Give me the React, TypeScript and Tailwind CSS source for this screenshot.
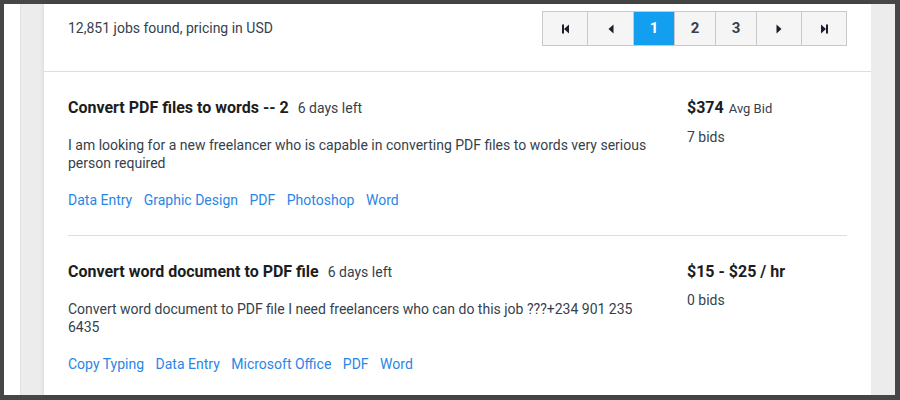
import React from "react";

const FirstIcon = () => (
  <svg width="9" height="10" viewBox="0 0 9 10" className="fill-[#1e1e2a]">
    <rect x="1" y="0.5" width="2" height="9" />
    <polygon points="8,0.5 3,5 8,9.5" />
  </svg>
);
const PrevIcon = () => (
  <svg width="6" height="10" viewBox="0 0 6 10" className="fill-[#1e1e2a]">
    <polygon points="5.5,0.5 0.5,5 5.5,9.5" />
  </svg>
);
const NextIcon = () => (
  <svg width="6" height="10" viewBox="0 0 6 10" className="fill-[#1e1e2a]">
    <polygon points="0.5,0.5 5.5,5 0.5,9.5" />
  </svg>
);
const LastIcon = () => (
  <svg width="9" height="10" viewBox="0 0 9 10" className="fill-[#1e1e2a]">
    <polygon points="1,0.5 6,5 1,9.5" />
    <rect x="6" y="0.5" width="2" height="9" />
  </svg>
);

type Job = {
  title: string;
  left: string;
  desc: string;
  tags: string[];
  price: string;
  suffix?: string;
  bids: string;
};

const jobs: Job[] = [
  {
    title: "Convert PDF files to words -- 2",
    left: "6 days left",
    desc: "I am looking for a new freelancer who is capable in converting PDF files to words very serious person required",
    tags: ["Data Entry", "Graphic Design", "PDF", "Photoshop", "Word"],
    price: "$374",
    suffix: "Avg Bid",
    bids: "7 bids",
  },
  {
    title: "Convert word document to PDF file",
    left: "6 days left",
    desc: "Convert word document to PDF file I need freelancers who can do this job ???+234 901 235 6435",
    tags: ["Copy Typing", "Data Entry", "Microsoft Office", "PDF", "Word"],
    price: "$15 - $25 / hr",
    bids: "0 bids",
  },
];

function PageBtn({
  w,
  active,
  first,
  children,
}: {
  w: string;
  active?: boolean;
  first?: boolean;
  children: React.ReactNode;
}) {
  return (
    <div
      className={`${w} h-full flex items-center justify-center text-[15px] font-bold ${
        first ? "" : "border-l border-[#c9c9c9]"
      } ${active ? "bg-[#139ff0] text-white" : "bg-[#f5f5f5] text-[#363f4d]"}`}
    >
      {children}
    </div>
  );
}

export default function App() {
  return (
    <div className="w-[900px] h-[400px] bg-[#464646] pt-[4px] pl-[4px] pr-[5px] pb-[5px] font-['Roboto',sans-serif]">
      <div className="w-full h-full bg-white flex">
        <div className="w-[16px] bg-white" />
        <div className="w-[24px] bg-[#ececec] border-l border-[#e2e2e2]" />
        <div className="w-[827px] h-full bg-white shadow-[0_0_4px_rgba(0,0,0,0.12)] flex flex-col overflow-hidden">
          <div className="flex items-start justify-between px-[24px] pt-[7px] h-[68px] shrink-0 border-b border-[#dedede]">
            <div className="h-[35px] flex items-center text-[14px] text-[#363f4d]">
              12,851 jobs found, pricing in USD
            </div>
            <div className="flex h-[35px] border border-[#c9c9c9]">
              <PageBtn w="w-[44px]" first>
                <FirstIcon />
              </PageBtn>
              <PageBtn w="w-[46px]">
                <PrevIcon />
              </PageBtn>
              <PageBtn w="w-[41px]" active>
                1
              </PageBtn>
              <PageBtn w="w-[41px]">2</PageBtn>
              <PageBtn w="w-[41px]">3</PageBtn>
              <PageBtn w="w-[45px]">
                <NextIcon />
              </PageBtn>
              <PageBtn w="w-[45px]">
                <LastIcon />
              </PageBtn>
            </div>
          </div>
          <div className="px-[24px]">
            {jobs.map((j, i) => (
              <div
                key={i}
                className={`flex pt-[26px] pb-[26px] ${
                  i === 0 ? "border-b border-[#dedede]" : ""
                }`}
              >
                <div className="w-[592px] flex flex-col">
                  <div className="h-[20px] flex items-baseline">
                    <span className="text-[16px] leading-[20px] font-bold text-[#1c1d21]">
                      {j.title}
                    </span>
                    <span className="ml-[9px] text-[14px] text-[#363f4d]">
                      {j.left}
                    </span>
                  </div>
                  <p className="mt-[18px] text-[14px] leading-[18px] text-[#363f4d]">
                    {j.desc}
                  </p>
                  <div className="mt-[19px] flex gap-x-[11.5px] text-[14px] leading-[18px] text-[#2a86e6]">
                    {j.tags.map((t) => (
                      <span key={t}>{t}</span>
                    ))}
                  </div>
                </div>
                <div className="ml-auto w-[160px] flex flex-col">
                  <div className="h-[20px] flex items-baseline">
                    <span className="text-[16px] leading-[20px] font-bold text-[#1c1d21]">
                      {j.price}
                    </span>
                    {j.suffix && (
                      <span className="ml-[5px] text-[13px] text-[#363f4d]">
                        {j.suffix}
                      </span>
                    )}
                  </div>
                  <div
                    className={`${
                      i === 0 ? "mt-[10px]" : "mt-[9px]"
                    } text-[14px] leading-[18px] text-[#363f4d]`}
                  >
                    {j.bids}
                  </div>
                </div>
              </div>
            ))}
          </div>
        </div>
        <div className="w-[24px] bg-[#ececec]" />
      </div>
    </div>
  );
}
